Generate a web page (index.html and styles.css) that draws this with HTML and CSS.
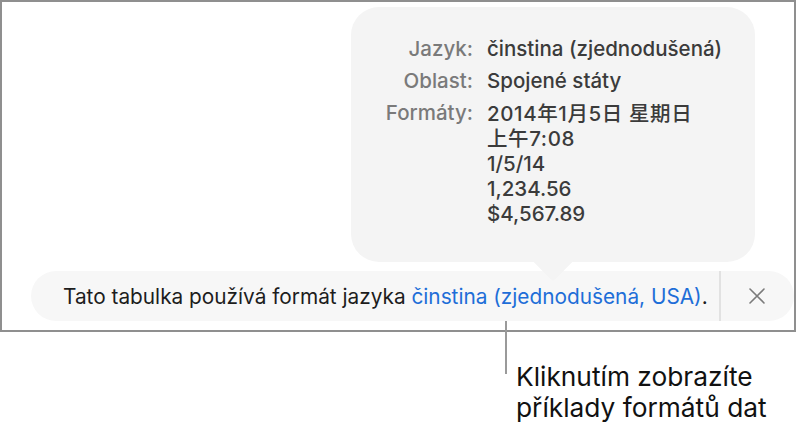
FILE: index.html
```html
<!DOCTYPE html>
<html lang="cs">
<head>
<meta charset="utf-8">
<link rel="stylesheet" href="styles.css">
</head>
<body>
<div class="frame">
  <div class="popover">
    <div class="grid">
      <div class="label">Jazyk:</div>
      <div class="value">činstina (zjednodušená)</div>
      <div class="label">Oblast:</div>
      <div class="value">Spojené státy</div>
      <div class="label">Formáty:</div>
      <div class="value formats">
        <div class="cjk">2014年1月5日 星期日</div>
        <div class="cjk">上午7:08</div>
        <div>1/5/14</div>
        <div>1,234.56</div>
        <div>$4,567.89</div>
      </div>
    </div>
    <div class="arrow"></div>
  </div>
  <div class="banner">
    <div class="msg">Tato tabulka používá formát jazyka <span class="link">činstina (zjednodušená, USA)</span>.</div>
    <div class="divider"></div>
    <div class="close">
      <svg width="18" height="18" viewBox="0 0 18 18"><path d="M2 2 L16 16 M16 2 L2 16" stroke="#7b7b7b" stroke-width="1.6" stroke-linecap="round" fill="none"/></svg>
    </div>
  </div>
</div>
<div class="leader"></div>
<div class="note">Kliknutím zobrazíte<br>příklady formátů dat</div>
</body>
</html>
```
FILE: styles.css
```css
html, body { margin: 0; padding: 0; background: #fff; }
body {
  font-family: Inter, "Noto Sans CJK SC", sans-serif;
  position: relative;
  width: 798px;
  height: 428px;
  overflow: hidden;
}
.frame {
  box-sizing: border-box;
  width: 796px;
  height: 332px;
  border: 2px solid #8f8f8f;
  position: relative;
  padding: 269px 0 0 29px;
}
.popover {
  position: absolute;
  left: 349px;
  top: 5px;
  width: 404px;
  height: 255px;
  box-sizing: border-box;
  background: #f4f4f4;
  border-radius: 28px;
  padding: 26px 0 0 0;
  z-index: 2;
}
.arrow {
  position: absolute;
  left: 186px;
  bottom: -13px;
  width: 32px;
  height: 32px;
  background: #f4f4f4;
  transform: rotate(45deg);
  border-radius: 4px;
  clip-path: polygon(100% 0, 100% 100%, 0 100%);
}
.grid {
  display: grid;
  grid-template-columns: 122px auto;
  column-gap: 14px;
  font-size: 20.5px;
  font-weight: 500;
}
.label { text-align: right; color: #7a7a7a; line-height: 32px; }
.value { color: #3b3b3b; line-height: 32px; white-space: nowrap; }
.formats { line-height: 25px; padding-top: 4px; }
.cjk { letter-spacing: 0.6px; }
.banner {
  display: flex;
  align-items: center;
  width: 763px;
  height: 50px;
  background: #f7f7f7;
  border-radius: 25px;
}
.msg {
  font-size: 20.8px;
  color: #1d1d1d;
  padding-left: 32px;
  width: 656px;
  white-space: nowrap;
}
.link { color: #1e6ed8; }
.divider { width: 2px; height: 50px; background: #e2e2e2; }
.close { flex: 1; display: flex; justify-content: center; align-items: center; padding-right: 2px; }
.leader {
  position: absolute;
  left: 505px;
  top: 321px;
  width: 2px;
  height: 53px;
  background: #9a9a9a;
}
.note {
  font-size: 26.3px;
  line-height: 31px;
  color: #111;
  margin: 29px 0 0 516px;
}
```
